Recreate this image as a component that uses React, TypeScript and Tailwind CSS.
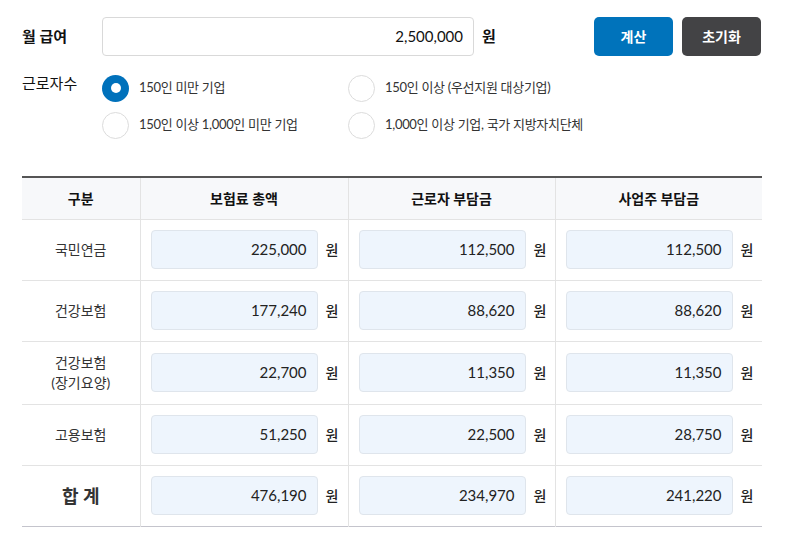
import { useState } from "react";

const FONT = "font-['Lato','Noto_Sans_CJK_KR',sans-serif]";

const SIZE_OPTIONS = [
  "150인 미만 기업",
  "150인 이상 (우선지원 대상기업)",
  "150인 이상 1,000인 미만 기업",
  "1,000인 이상 기업, 국가 지방자치단체",
];

type Row = { name: string[]; total: string; worker: string; employer: string; tall?: boolean; sum?: boolean };

const ROWS: Row[] = [
  { name: ["국민연금"], total: "225,000", worker: "112,500", employer: "112,500" },
  { name: ["건강보험"], total: "177,240", worker: "88,620", employer: "88,620" },
  { name: ["건강보험", "(장기요양)"], total: "22,700", worker: "11,350", employer: "11,350", tall: true },
  { name: ["고용보험"], total: "51,250", worker: "22,500", employer: "28,750" },
  { name: ["합 계"], total: "476,190", worker: "234,970", employer: "241,220", sum: true },
];

const Radio = ({ label, checked, onClick }: { label: string; checked: boolean; onClick: () => void }) => (
  <button type="button" onClick={onClick} className="flex items-center gap-[10px] h-[28px] text-left">
    {checked ? (
      <span className="w-[27px] h-[27px] rounded-full bg-[#0071bb] flex items-center justify-center">
        <span className="w-[10px] h-[10px] rounded-full bg-white" />
      </span>
    ) : (
      <span className="w-[27px] h-[27px] rounded-full border border-[#dcdcdc] bg-white" />
    )}
    <span className="text-[13px] text-[#333] tracking-[-0.3px]">{label}</span>
  </button>
);

const AmountCell = ({ value }: { value: string }) => (
  <td className="border-l border-[#e3e3e3] px-0">
    <div className="flex items-center pl-[10px]">
      <div className="w-[167px] h-[39px] rounded-[4px] border border-[#dfe5ec] bg-[#eef5fd] flex items-center justify-end pr-[10px] text-[15px] text-[#222]">
        {value}
      </div>
      <span className="ml-[8px] text-[14px] font-medium text-[#222]">원</span>
    </div>
  </td>
);

export default function App() {
  const [size, setSize] = useState(0);

  return (
    <div className={`${FONT} w-[786px] min-h-[539px] bg-white px-[22px] pt-[17px]`}>
      <div className="flex items-center h-[39px] w-[739px]">
        <label className="w-[80px] text-[15px] font-bold text-[#111]">월 급여</label>
        <div className="w-[372px] h-[39px] rounded-[4px] border border-[#d9d9d9] flex items-center justify-end pr-[10px] text-[15px] text-[#111]">
          2,500,000
        </div>
        <span className="ml-[8px] text-[15px] font-semibold text-[#111]">원</span>
        <div className="ml-auto flex gap-[9px]">
          <button className="w-[79px] h-[39px] rounded-[5px] bg-[#0073bb] text-white text-[14px] font-semibold">계산</button>
          <button className="w-[79px] h-[39px] rounded-[5px] bg-[#434345] text-white text-[14px] font-semibold">초기화</button>
        </div>
      </div>

      <div className="flex mt-[18px]">
        <label className="w-[80px] text-[15px] text-[#111] -mt-[2px]">근로자수</label>
        <div className="grid grid-cols-[246px_1fr] gap-y-[9px]">
          {SIZE_OPTIONS.map((o, i) => (
            <Radio key={o} label={o} checked={size === i} onClick={() => setSize(i)} />
          ))}
        </div>
      </div>

      <table className="mt-[37px] w-[740px] border-collapse table-fixed border-t-2 border-t-[#555] border-b border-b-[#c4c4cc]">
        <colgroup>
          <col className="w-[118px]" />
          <col className="w-[208px]" />
          <col className="w-[207px]" />
          <col className="w-[207px]" />
        </colgroup>
        <thead>
          <tr className="h-[42px] bg-[#f7f8fa] text-[14px] font-bold text-[#111]">
            <th>구분</th>
            <th className="border-l border-[#e3e3e3]">보험료 총액</th>
            <th className="border-l border-[#e3e3e3]">근로자 부담금</th>
            <th className="border-l border-[#e3e3e3]">사업주 부담금</th>
          </tr>
        </thead>
        <tbody>
          {ROWS.map((r) => (
            <tr key={r.name.join("")} className={`border-t border-[#e3e3e3] ${r.tall ? "h-[63px]" : "h-[61px]"}`}>
              <td className={`text-center text-[#333] leading-[20px] ${r.sum ? "text-[18px] font-bold text-[#111]" : "text-[14px]"}`}>
                {r.name.map((n) => (
                  <div key={n}>{n}</div>
                ))}
              </td>
              <AmountCell value={r.total} />
              <AmountCell value={r.worker} />
              <AmountCell value={r.employer} />
            </tr>
          ))}
        </tbody>
      </table>
    </div>
  );
}
